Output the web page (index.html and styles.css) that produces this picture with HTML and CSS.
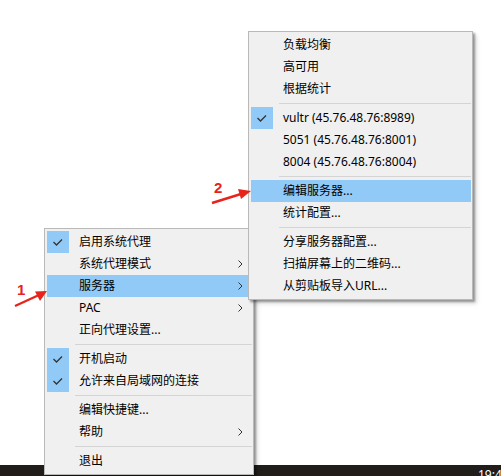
FILE: index.html
```html
<!DOCTYPE html>
<html>
<head>
<meta charset="utf-8">
<link rel="stylesheet" href="styles.css">
</head>
<body>
<div class="desk">
  <div class="taskbar"><span class="clock">19:4</span></div>

  <div class="menu menu-main">
    <div class="item"><span class="chk on"><svg width="22" height="22" viewBox="0 0 22 22"><path d="M6.5 11 L9.5 14 L15 8.5" fill="none" stroke="#333" stroke-width="1.3"/></svg></span><span class="label">启用系统代理</span></div>
    <div class="item"><span class="chk"></span><span class="label">系统代理模式</span><svg class="sub" width="5" height="8" viewBox="0 0 5 8"><path d="M0.5 0.5 L4 4 L0.5 7.5" fill="none" stroke="#333" stroke-width="1"/></svg></div>
    <div class="item hot"><span class="chk"></span><span class="label">服务器</span><svg class="sub" width="5" height="8" viewBox="0 0 5 8"><path d="M0.5 0.5 L4 4 L0.5 7.5" fill="none" stroke="#333" stroke-width="1"/></svg></div>
    <div class="item"><span class="chk"></span><span class="label">PAC</span><svg class="sub" width="5" height="8" viewBox="0 0 5 8"><path d="M0.5 0.5 L4 4 L0.5 7.5" fill="none" stroke="#333" stroke-width="1"/></svg></div>
    <div class="item"><span class="chk"></span><span class="label">正向代理设置...</span></div>
    <div class="sep"></div>
    <div class="item"><span class="chk on"><svg width="22" height="22" viewBox="0 0 22 22"><path d="M6.5 11 L9.5 14 L15 8.5" fill="none" stroke="#333" stroke-width="1.3"/></svg></span><span class="label">开机启动</span></div>
    <div class="item"><span class="chk on"><svg width="22" height="22" viewBox="0 0 22 22"><path d="M6.5 11 L9.5 14 L15 8.5" fill="none" stroke="#333" stroke-width="1.3"/></svg></span><span class="label">允许来自局域网的连接</span></div>
    <div class="sep"></div>
    <div class="item"><span class="chk"></span><span class="label">编辑快捷键...</span></div>
    <div class="item"><span class="chk"></span><span class="label">帮助</span><svg class="sub" width="5" height="8" viewBox="0 0 5 8"><path d="M0.5 0.5 L4 4 L0.5 7.5" fill="none" stroke="#333" stroke-width="1"/></svg></div>
    <div class="sep"></div>
    <div class="item"><span class="chk"></span><span class="label">退出</span></div>
  </div>

  <div class="menu menu-servers">
    <div class="item"><span class="chk"></span><span class="label">负载均衡</span></div>
    <div class="item"><span class="chk"></span><span class="label">高可用</span></div>
    <div class="item"><span class="chk"></span><span class="label">根据统计</span></div>
    <div class="sep"></div>
    <div class="item"><span class="chk on"><svg width="22" height="22" viewBox="0 0 22 22"><path d="M6.5 11 L9.5 14 L15 8.5" fill="none" stroke="#333" stroke-width="1.3"/></svg></span><span class="label">vultr (45.76.48.76:8989)</span></div>
    <div class="item"><span class="chk"></span><span class="label">5051 (45.76.48.76:8001)</span></div>
    <div class="item"><span class="chk"></span><span class="label">8004 (45.76.48.76:8004)</span></div>
    <div class="sep"></div>
    <div class="item hot"><span class="chk"></span><span class="label">编辑服务器...</span></div>
    <div class="item"><span class="chk"></span><span class="label">统计配置...</span></div>
    <div class="sep"></div>
    <div class="item"><span class="chk"></span><span class="label">分享服务器配置...</span></div>
    <div class="item"><span class="chk"></span><span class="label">扫描屏幕上的二维码...</span></div>
    <div class="item"><span class="chk"></span><span class="label">从剪贴板导入URL...</span></div>
  </div>

  <div class="mark mark-1"><span class="num">1</span>
    <svg class="arrow" width="40" height="24" viewBox="0 0 40 24"><path d="M2 22 L26 11" stroke="#e8231c" stroke-width="2.4" fill="none"/><path d="M34 7 L22 7.5 L27 17 Z" fill="#e8231c"/></svg>
  </div>
  <div class="mark mark-2"><span class="num">2</span>
    <svg class="arrow" width="42" height="20" viewBox="0 0 42 20"><path d="M1 18 L30 9" stroke="#e8231c" stroke-width="2.4" fill="none"/><path d="M40 6 L27 4 L30 14 Z" fill="#e8231c"/></svg>
  </div>
</div>
</body>
</html>
```

FILE: styles.css
```css
html, body {
  margin: 0;
  padding: 0;
  background: #ffffff;
}

.desk {
  position: relative;
  width: 501px;
  height: 476px;
  overflow: hidden;
  font-family: "Noto Sans", "Noto Sans CJK SC", sans-serif;
  font-size: 12px;
  color: #000;
}

.taskbar {
  position: absolute;
  left: 0;
  right: 0;
  top: 465px;
  height: 11px;
  background: #201d1a;
}

.clock {
  position: absolute;
  left: 478px;
  top: 3px;
  color: #fff;
  font-size: 12px;
  line-height: 14px;
}

.menu {
  position: absolute;
  display: flex;
  flex-direction: column;
  background: #f0f0f0;
  border: 1px solid #b9b9b9;
  padding: 2px 1px 2px 2px;
  box-shadow: 2px 2px 2px rgba(0, 0, 0, 0.35), 4px 4px 4px rgba(0, 0, 0, 0.12);
}

.menu-main {
  left: 44px;
  top: 228px;
  width: 205px;
  z-index: 1;
}

.menu-servers {
  left: 248px;
  top: 31px;
  width: 220px;
  z-index: 2;
}

.item {
  display: flex;
  align-items: center;
  height: 22px;
  position: relative;
}

.item.hot {
  background: #91c9f7;
}

.chk {
  width: 22px;
  height: 22px;
  flex: none;
  display: block;
}

.chk svg {
  display: block;
}

.chk.on {
  background: #91c9f7;
}

.label {
  margin-left: 10px;
  line-height: 22px;
  white-space: nowrap;
  flex: 1;
}

.sub {
  flex: none;
  margin-right: 9px;
}

.sep {
  height: 7px;
  display: flex;
  align-items: center;
  padding-left: 28px;
}

.sep::after {
  content: "";
  display: block;
  flex: 1;
  height: 1px;
  background: #d4d4d4;
}

.mark {
  position: absolute;
  z-index: 3;
}

.mark .num {
  position: absolute;
  color: #e8231c;
  font-family: "Liberation Sans", sans-serif;
  font-weight: bold;
  font-size: 15px;
  line-height: 15px;
}

.mark .arrow {
  position: absolute;
  display: block;
}

.mark-1 {
  left: 12px;
  top: 280px;
}

.mark-1 .num {
  left: 5px;
  top: 2px;
}

.mark-1 .arrow {
  left: 1px;
  top: 4px;
}

.mark-2 {
  left: 210px;
  top: 178px;
}

.mark-2 .num {
  left: 4px;
  top: 2px;
}

.mark-2 .arrow {
  left: 1px;
  top: 7px;
}
```
